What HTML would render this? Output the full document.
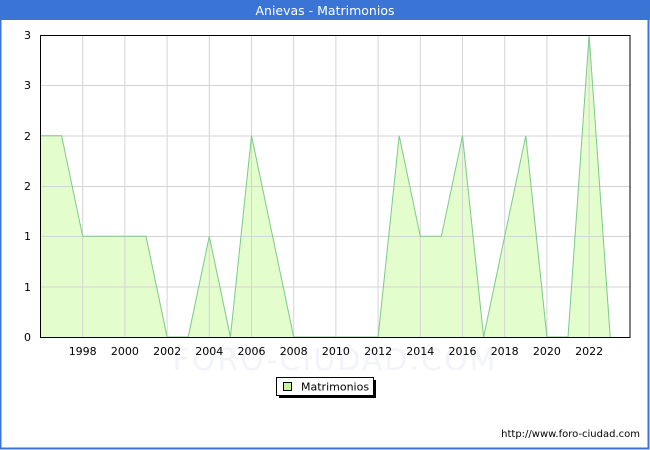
<!DOCTYPE html>
<html><head><meta charset="utf-8"><style>
html,body{margin:0;padding:0;background:#fff;}
svg{display:block;font-family:"DejaVu Sans","Liberation Sans",sans-serif;}
</style></head><body>
<svg width="650" height="450" viewBox="0 0 650 450" xmlns="http://www.w3.org/2000/svg">
<rect x="0" y="0" width="650" height="450" fill="#fff"/>
<rect x="0.5" y="0.5" width="648" height="448" fill="none" stroke="#3a75d6" stroke-width="2"/>
<rect x="0" y="0" width="650" height="20" fill="#3a75d6"/>
<text x="325" y="15" text-anchor="middle" font-size="12.5" fill="#fff">Anievas - Matrimonios</text>
<text x="335" y="370" text-anchor="middle" font-size="30" fill="#f2f4fa" letter-spacing="2">FORO-CIUDAD.COM</text>
<polygon fill="#e3fdcd" points="40.5,337 40.5,135.7 61.6,135.7 82.7,236.3 103.8,236.3 124.9,236.3 146,236.3 167.1,337 188.2,337 209.3,236.3 230.4,337 251.5,135.7 272.6,236.3 293.7,337 378.1,337 399.2,135.7 420.3,236.3 441.4,236.3 462.5,135.7 483.6,337 504.7,236.3 525.8,135.7 546.9,337 568,337 589.1,35 610.2,337"/>
<g stroke="#d4d4d4" stroke-width="1">
<line x1="40" y1="85.5" x2="630" y2="85.5"/><line x1="40" y1="136" x2="630" y2="136"/><line x1="40" y1="186.5" x2="630" y2="186.5"/><line x1="40" y1="236.5" x2="630" y2="236.5"/><line x1="40" y1="287" x2="630" y2="287"/>
<line x1="82.7" y1="35" x2="82.7" y2="337"/><line x1="124.9" y1="35" x2="124.9" y2="337"/><line x1="167.1" y1="35" x2="167.1" y2="337"/><line x1="209.3" y1="35" x2="209.3" y2="337"/><line x1="251.5" y1="35" x2="251.5" y2="337"/><line x1="293.7" y1="35" x2="293.7" y2="337"/><line x1="335.9" y1="35" x2="335.9" y2="337"/><line x1="378.1" y1="35" x2="378.1" y2="337"/><line x1="420.3" y1="35" x2="420.3" y2="337"/><line x1="462.5" y1="35" x2="462.5" y2="337"/><line x1="504.7" y1="35" x2="504.7" y2="337"/><line x1="546.9" y1="35" x2="546.9" y2="337"/><line x1="589.1" y1="35" x2="589.1" y2="337"/>
</g>
<polyline fill="none" stroke="#7cc98a" stroke-width="1" points="40.5,135.7 61.6,135.7 82.7,236.3 103.8,236.3 124.9,236.3 146,236.3 167.1,337 188.2,337 209.3,236.3 230.4,337 251.5,135.7 272.6,236.3 293.7,337 378.1,337 399.2,135.7 420.3,236.3 441.4,236.3 462.5,135.7 483.6,337 504.7,236.3 525.8,135.7 546.9,337 568,337 589.1,35 610.2,337"/>
<rect x="40.5" y="35.5" width="589.5" height="302" fill="none" stroke="#000" stroke-width="1"/>
<g font-size="11" fill="#000" text-anchor="end">
<text x="31" y="39">3</text><text x="31" y="89">3</text><text x="31" y="140">2</text><text x="31" y="190">2</text><text x="31" y="240">1</text><text x="31" y="291">1</text><text x="31" y="341">0</text>
</g>
<g font-size="11" fill="#000" text-anchor="middle">
<text x="82.7" y="355">1998</text><text x="124.9" y="355">2000</text><text x="167.1" y="355">2002</text><text x="209.3" y="355">2004</text><text x="251.5" y="355">2006</text><text x="293.7" y="355">2008</text><text x="335.9" y="355">2010</text><text x="378.1" y="355">2012</text><text x="420.3" y="355">2014</text><text x="462.5" y="355">2016</text><text x="504.7" y="355">2018</text><text x="546.9" y="355">2020</text><text x="589.1" y="355">2022</text>
</g>
<rect x="279" y="380" width="97" height="18" fill="#000"/>
<rect x="276.5" y="377.5" width="97" height="18" fill="#fff" stroke="#000" stroke-width="1"/>
<rect x="283.5" y="382.5" width="8" height="8" fill="#c8f5a0" stroke="#000" stroke-width="1"/>
<text x="301" y="390.5" font-size="11" fill="#000">Matrimonios</text>
<text x="640" y="437" text-anchor="end" font-size="10" fill="#000">http://www.foro-ciudad.com</text>
</svg>
</body></html>
